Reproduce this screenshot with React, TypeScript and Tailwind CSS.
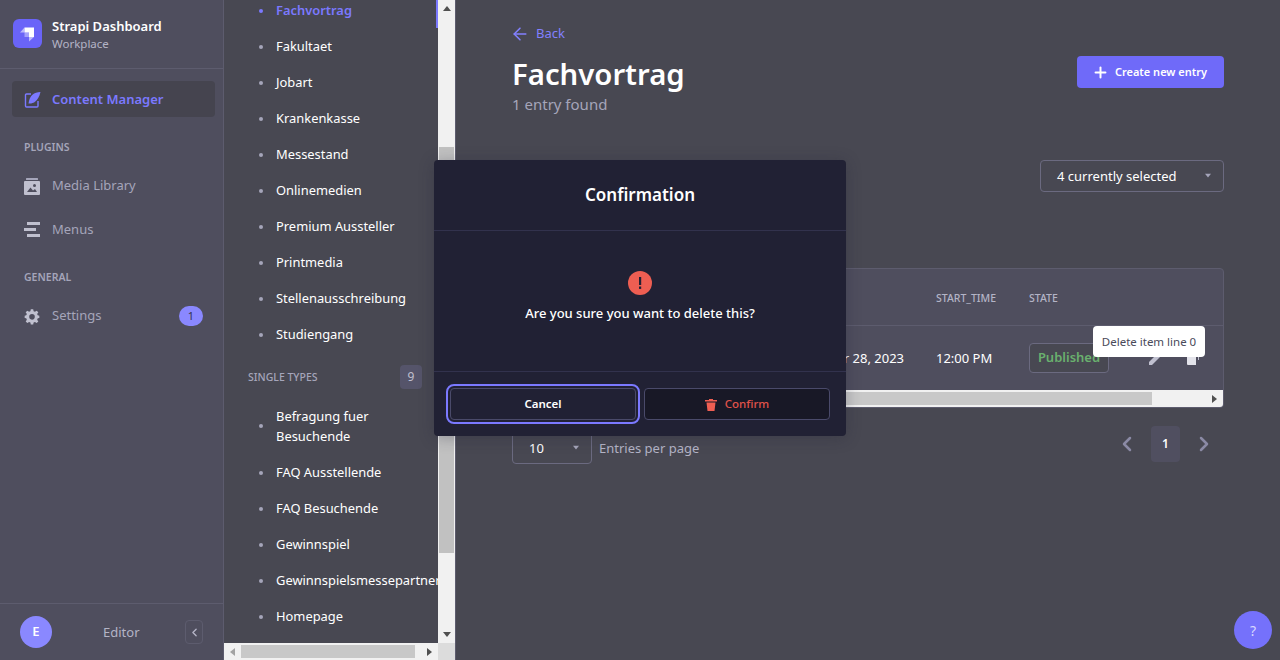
import React from "react";
import { ChevronLeft, ChevronRight, ArrowLeft, Plus } from "lucide-react";

const collection = ["Fakultaet","Jobart","Krankenkasse","Messestand","Onlinemedien","Premium Aussteller","Printmedia","Stellenausschreibung","Studiengang"];
const single = ["FAQ Ausstellende","FAQ Besuchende","Gewinnspiel","Gewinnspielsmessepartner","Homepage"];

function Caret({ dir, color = "#505050", size = 8 }: { dir: "up" | "down" | "left" | "right"; color?: string; size?: number }) {
  const p = { up: "0,6 4,1 8,6", down: "0,1 8,1 4,6", left: "6,0 6,8 1,4", right: "1,0 1,8 6,4" }[dir];
  return <svg width={size} height={size} viewBox="0 0 8 8"><polygon points={p} fill={color} /></svg>;
}

function Item({ children, active }: { children: React.ReactNode; active?: boolean }) {
  return (
    <div className="flex h-9 items-center whitespace-nowrap pl-[35px] text-[12.9px]">
      <span className={`mr-[13px] h-[4px] w-[4px] shrink-0 rounded-full ${active ? "bg-[#7b79ff]" : "bg-[#a5a5ba]"}`} />
      <span className={active ? "font-semibold text-[#7b79ff]" : "text-white"}>{children}</span>
    </div>
  );
}

function MainNav({ icon, children, badge }: { icon: React.ReactNode; children: React.ReactNode; badge?: string }) {
  return (
    <div className="ml-3 flex h-9 w-[203px] items-center pl-3 pr-3 text-[13px] text-[#a5a5ba]">
      <span className="flex w-4 justify-center">{icon}</span>
      <span className="ml-3 flex-1">{children}</span>
      {badge && <span className="flex h-5 w-6 items-center justify-center rounded-full bg-[#8a88ff] text-[11px] text-[#33334a]">{badge}</span>}
    </div>
  );
}

function Logo() {
  return (
    <div className="flex h-[29px] w-[29px] items-center justify-center rounded-md bg-[#6a64f8]">
      <svg width="17" height="17" viewBox="0 0 17 17">
        <path d="M5.5 2.5H15V12H10V7.5H5.5Z" fill="#fff" />
        <path d="M5.5 2.5V7.5H1Z" fill="#fff" fillOpacity=".55" />
        <path d="M10 12H15L10 16.5Z" fill="#fff" fillOpacity=".55" />
        <path d="M5.5 7.5H10V12H5.5Z" fill="#fff" fillOpacity=".4" />
      </svg>
    </div>
  );
}

export default function App() {
  return (
    <div className="relative flex h-[660px] w-[1280px] overflow-hidden bg-[#484852] text-white" style={{ fontFamily: '"Noto Sans", sans-serif' }}>
      {/* primary nav */}
      <aside className="flex h-full w-[224px] shrink-0 flex-col border-r border-[#5d5c6e] bg-[#4f4e5e]">
        <div className="flex h-[69px] shrink-0 items-center border-b border-[#5d5c6e] pl-[13px] pb-[2px]">
          <Logo />
          <div className="ml-[10px] mt-[4px]">
            <div className="text-[13px] font-semibold leading-[18px]">Strapi Dashboard</div>
            <div className="text-[11.5px] leading-[18px] text-[#b4b4c6]">Workplace</div>
          </div>
        </div>
        <div className="ml-3 mt-3 flex h-9 w-[203px] items-center rounded bg-[#45444f] pl-3 text-[13px] font-semibold text-[#7b79ff]">
          <svg width="17" height="17" viewBox="0 0 17 17" className="shrink-0">
            <path d="M7 3H2.5A1 1 0 0 0 1.5 4V15A1 1 0 0 0 2.5 16H13A1 1 0 0 0 14 15V10" fill="none" stroke="#7b79ff" strokeWidth="1.4" />
            <path d="M16.5 1C10 1 5.500 4.500 4.500 12.500C8 13 14 11.500 16.500 1Z" fill="#7b79ff" />
          </svg>
          <span className="ml-[11px] mt-[2px]">Content Manager</span>
        </div>
        <div className="mt-[23px] h-[14px] pl-6 text-[10.5px] font-semibold uppercase leading-[14px] text-[#a5a5ba]">Plugins</div>
        <div className="mt-[14px]">
          <MainNav icon={
            <svg width="16" height="17" viewBox="0 0 16 17"><rect x="2" y="0" width="12" height="2" rx="0.500" fill="#a5a5ba" /><path d="M1 3H15A1 1 0 0 1 16 4V16A1 1 0 0 1 15 17H1A1 1 0 0 1 0 16V4A1 1 0 0 1 1 3Z" fill="#c0c0cf" /><circle cx="10.500" cy="7.500" r="1.500" fill="#4f4e5e" /><path d="M3 14L6.500 9.500L9 12.500L11 11L13 14Z" fill="#4f4e5e" /></svg>
          }>Media Library</MainNav>
          <div className="h-2" />
          <MainNav icon={
            <svg width="16" height="16" viewBox="0 0 16 16"><rect x="3" y="0" width="13" height="3" fill="#c0c0cf" /><rect x="0" y="6" width="12" height="3" fill="#c0c0cf" /><rect x="3" y="12" width="13" height="3" fill="#c0c0cf" /></svg>
          }>Menus</MainNav>
        </div>
        <div className="mt-[22px] h-[14px] pl-6 text-[10.5px] font-semibold uppercase leading-[14px] text-[#a5a5ba]">General</div>
        <div className="mt-[14px]">
          <MainNav badge="1" icon={
            <svg width="17" height="17" viewBox="0 0 24 24" fill="#c0c0cf"><path fillRule="evenodd" d="M13.800 1h-3.600l-.6 3.100c-.7.2-1.400.5-2 .9L5 3.200 2.500 5.700l1.800 2.600c-.4.600-.7 1.300-.9 2L1 10.800v3.500l2.400.5c.2.700.5 1.400.9 2l-1.800 2.600L5 21.900l2.600-1.800c.6.400 1.300.7 2 .9l.6 3h3.600l.6-3c.7-.2 1.400-.5 2-.9l2.600 1.800 2.500-2.500-1.800-2.600c.4-.6.7-1.300.9-2l2.400-.5v-3.500l-2.400-.5c-.2-.7-.5-1.400-.9-2l1.800-2.600L19 3.200 16.400 5c-.6-.4-1.300-.7-2-.9zM12 8.300a4.200 4.200 0 1 1 0 8.400 4.200 4.200 0 0 1 0-8.400z" /></svg>
          }>Settings</MainNav>
        </div>
        <div className="mt-auto flex h-[57px] items-center border-t border-[#5d5c6e] pl-5 pr-[20px]">
          <span className="flex h-8 w-8 items-center justify-center rounded-full bg-[#8a88ff] text-[13px] font-semibold">E</span>
          <span className="ml-[51px] mt-[2px] flex-1 text-[13px] text-[#b4b4c6]">Editor</span>
          <span className="flex h-6 w-[18px] items-center justify-center rounded border border-[#5d5c6e]"><ChevronLeft size={13} strokeWidth={2.500} color="#b4b4c6" /></span>
        </div>
      </aside>

      {/* secondary nav */}
      <section className="flex h-full w-[232px] shrink-0 flex-col border-r border-[#5d5c6e]">
        <div className="flex min-h-0 flex-1">
          <div className="relative min-w-0 flex-1 overflow-hidden">
            <div className="-mt-[7px]">
              <Item active>Fachvortrag</Item>
              {collection.map((c) => <Item key={c}>{c}</Item>)}
            </div>
            <div className="mt-[10px] flex h-[28px] items-center justify-between pl-6 pr-4">
              <span className="mt-[1px] text-[10.5px] font-medium text-[#a5a5ba]">SINGLE TYPES</span>
              <span className="flex h-6 w-[22px] items-center justify-center rounded bg-[#55546a] text-[12px] text-[#c0c0cf]">9</span>
            </div>
            <div className="mt-[15px] flex items-center pl-[35px] text-[12.9px] leading-5">
              <span className="mr-[13px] h-[4px] w-[4px] shrink-0 rounded-full bg-[#a5a5ba]" />
              <span>Befragung fuer<br />Besuchende</span>
            </div>
            <div className="mt-[9px]">
              {single.map((c) => <Item key={c}>{c}</Item>)}
            </div>
            <span className="absolute right-0 top-0 h-7 w-[2px] bg-[#7b79ff]" />
          </div>
          <div className="flex w-[17px] shrink-0 flex-col items-center bg-[#f1f1f1]">
            <div className="flex h-[17px] items-center justify-center"><Caret dir="up" /></div>
            <div className="mt-[130px] h-[406px] w-[15px] bg-[#c1c1c1]" />
            <div className="mt-auto flex h-[17px] items-center justify-center"><Caret dir="down" /></div>
          </div>
        </div>
        <div className="flex h-[17px] shrink-0 items-center bg-[#f1f1f1]">
          <div className="flex w-[17px] justify-center"><Caret dir="left" color="#a3a3a3" /></div>
          <div className="h-[13px] w-[174px] bg-[#c8c8c8]" />
          <div className="ml-auto flex w-[17px] justify-center"><Caret dir="right" /></div>
          <div className="h-[17px] w-[17px] bg-[#dcdcdc]" />
        </div>
      </section>

      {/* main */}
      <main className="flex min-w-0 flex-1 flex-col pl-[56px] pr-[56px]">
        <div className="mt-[25px] flex h-[18px] items-center text-[13px] text-[#8280ff]">
          <ArrowLeft size={20} strokeWidth={1.800} className="ml-[-2px]" />
          <span className="ml-[6px]">Back</span>
        </div>
        <div className="flex items-start justify-between">
          <div>
            <h1 className="mt-[10px] text-[29.3px] font-semibold leading-[42px]">Fachvortrag</h1>
            <div className="-mt-[1px] h-[21px] text-[15px] leading-[20px] text-[#a5a5ba]">1 entry found</div>
          </div>
          <button className="mt-[13px] flex h-8 w-[147px] items-center justify-center rounded bg-[#6f6af9] pr-[2px] text-[11px] font-semibold">
            <Plus size={17} strokeWidth={2.800} className="mr-[6px]" />Create new entry
          </button>
        </div>
        <div className="mt-[45px] flex justify-end">
          <div className="flex h-8 w-[184px] items-center justify-between rounded border border-[#6b6a80] pl-4 pr-3 text-[13px]">
            <span className="mt-[2px]">4 currently selected</span>
            <Caret dir="down" color="#a5a5ba" size={6} />
          </div>
        </div>
        <div className="mt-[76px] h-[140px] overflow-hidden rounded border border-[#5d5c6e] bg-[#4f4e5e]">
          <div className="flex h-[57px] items-center border-b border-[#5d5c6e] pt-[4px] text-[10.5px] font-medium text-[#b4b4c6]">
            <span className="ml-[423px] w-[93px]">START_TIME</span>
            <span>STATE</span>
          </div>
          <div className="flex h-[64px] items-center text-[13px]">
            <span className="mt-[2px] w-[391px] text-right">Apr 28, 2023</span>
            <span className="ml-[32px] mt-[2px] w-[93px]">12:00 PM</span>
            <span className="flex h-[30px] w-[80px] items-center justify-center rounded border border-[#6b6a80] bg-[#484852] text-[13px] font-semibold text-[#6ab06e]">Published</span>
            <svg width="14" height="14" viewBox="0 0 14 14" className="ml-[40px]"><path d="M0 14V11L9 2L12 5L3 14Z" fill="#c0c0cf" /></svg>
            <svg width="13" height="14" viewBox="0 0 13 14" className="ml-[24px]"><path d="M0 2H9V14H1A1 1 0 0 1 0 13Z" fill="#e3e3ea" /><rect x="11" y="6" width="1" height="3" fill="#c0c0cf" /></svg>
          </div>
          <div className="flex h-[17px] items-center bg-[#f1f1f1]">
            <div className="h-[13px] w-[639px] bg-[#c8c8c8]" />
            <div className="ml-auto flex w-[17px] justify-center"><Caret dir="right" /></div>
          </div>
        </div>
        <div className="mt-[18px] flex items-start justify-between">
          <div className="mt-[6px] flex items-center text-[13px] text-[#b4b4c6]">
            <div className="flex h-8 w-[80px] items-center justify-between rounded border border-[#6b6a80] pl-4 pr-3 text-[13px] text-white">
              <span className="mt-[2px]">10</span><Caret dir="down" color="#a5a5ba" size={6} />
            </div>
            <span className="ml-[7px] mt-[2px]">Entries per page</span>
          </div>
          <div className="mr-[8px] flex items-center gap-[12px]">
            <ChevronLeft size={24} strokeWidth={2.500} color="#8b8aa5" />
            <span className="flex h-9 w-[29px] items-center justify-center rounded bg-[#504f60] text-[12px] font-semibold">1</span>
            <ChevronRight size={24} strokeWidth={2.500} color="#8b8aa5" />
          </div>
        </div>
      </main>

      {/* tooltip */}
      <div className="absolute left-[1093px] top-[326px] flex h-[31px] w-[112px] items-center justify-center rounded bg-white text-[11.5px] text-[#4a4a5a]">Delete item line 0</div>

      {/* help */}
      <div className="absolute left-[1234px] top-[611px] flex h-[38px] w-[38px] items-center justify-center rounded-full bg-[#7571fb] text-[14px] text-[#d8d8ff]">?</div>

      {/* dialog */}
      <div className="absolute left-[434px] top-[160px] flex h-[276px] w-[412px] flex-col rounded bg-[#212134] shadow-[0_2px_15px_rgba(33,33,52,0.3)]">
        <div className="flex h-[71px] items-center justify-center border-b border-[#32324d] text-[17px] font-semibold">Confirmation</div>
        <div className="flex h-[141px] flex-col items-center border-b border-[#32324d] pt-[40px]">
          <svg width="24" height="24" viewBox="0 0 24 24"><circle cx="12" cy="12" r="12" fill="#ee5e52" /><rect x="11" y="6" width="2.200" height="8" fill="#212134" /><rect x="11" y="15.500" width="2.200" height="2.400" fill="#212134" /></svg>
          <div className="mt-[9px] text-[13px] font-medium">Are you sure you want to delete this?</div>
        </div>
        <div className="flex gap-[8px] pl-4 pt-[16px]">
          <button className="flex h-8 w-[186px] items-center justify-center rounded border border-[#4a4a6a] text-[11.5px] font-semibold outline-2 outline-offset-2 outline-[#7b79ff]">Cancel</button>
          <button className="flex h-8 w-[186px] items-center justify-center rounded border border-[#4a4a6a] bg-[#181826] text-[11.5px] font-medium text-[#e0534a]">
            <svg width="12" height="13" viewBox="0 0 12 13" className="mr-2"><path d="M0 2H4V1H8V2H12V3.500H0ZM1.500 4.500H10.500L9.500 13H2.500Z" fill="#ee5e52" /></svg>
            Confirm
          </button>
        </div>
      </div>
    </div>
  );
}
